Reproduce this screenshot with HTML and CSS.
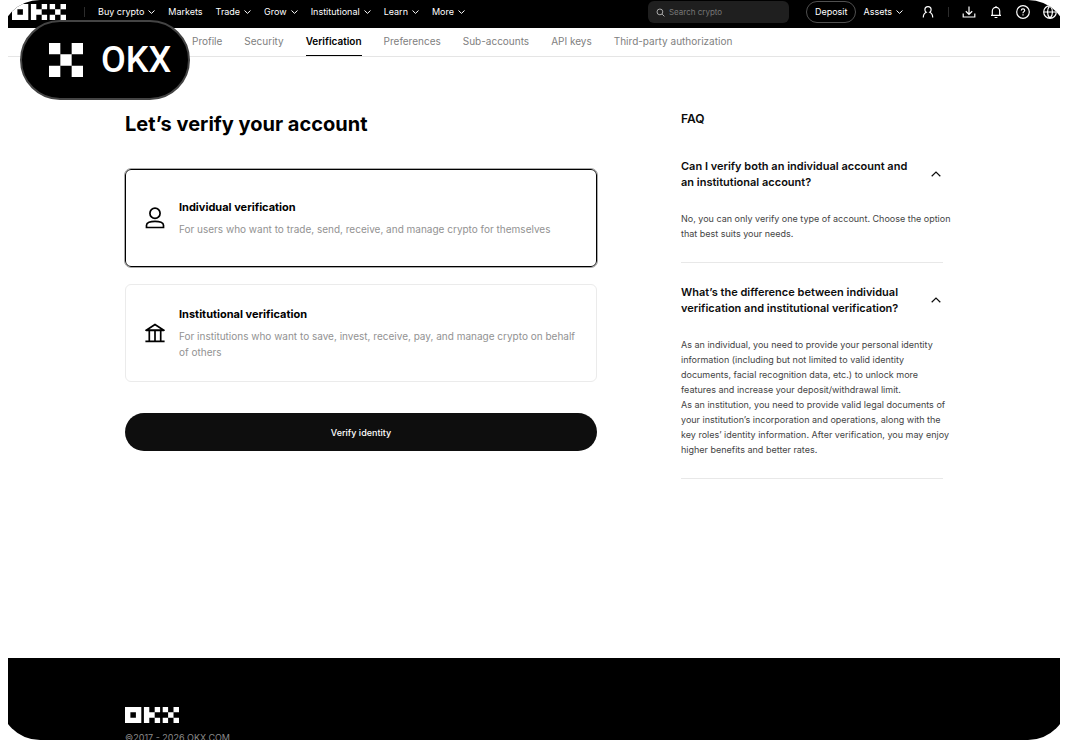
FILE: index.html
```html
<!DOCTYPE html>
<html lang="en">
<head>
<meta charset="utf-8">
<title>Verification | OKX</title>
<link rel="stylesheet" href="styles.css">
</head>
<body>
<svg width="0" height="0" class="defs" aria-hidden="true">
  <symbol id="chevron" viewBox="0 0 7 4"><path d="M.5 .5 3.500 3.400 6.500 .5" fill="none" stroke="currentColor"/></symbol>
  <symbol id="chevron-up" viewBox="0 0 10 6"><path d="M.7 5.200 5 1 9.300 5.200" fill="none" stroke="currentColor" stroke-width="1.200"/></symbol>
  <symbol id="logo" viewBox="0 0 54 16">
    <path fill="currentColor" fill-rule="evenodd" d="M0 0h16.300v16H0zM5.400 5.300v5.400h5.500V5.300zM18.900 0h5.400v5.300h5.400v5.400h-5.400V16h-5.400zM29.700 0h5.400v5.300h-5.400zM29.700 10.700h5.400V16h-5.400zM37.700 0h5.400v5.300h-5.400zM48.500 0H54v5.300h-5.500zM43.100 5.300h5.400v5.400h-5.400zM37.700 10.700h5.400V16h-5.400zM48.500 10.700H54V16h-5.500z"/>
  </symbol>
</svg>
<div class="frame">
  <header class="topbar">
    <a class="logo-link" href="#" aria-label="OKX home"><svg class="logo"><use href="#logo"/></svg></a>
    <span class="divider divider-logo"></span>
    <nav class="menu" aria-label="Main">
      <button class="menu-item">Buy crypto <svg class="chevron"><use href="#chevron"/></svg></button>
      <a class="menu-item" href="#">Markets</a>
      <button class="menu-item">Trade <svg class="chevron"><use href="#chevron"/></svg></button>
      <button class="menu-item">Grow <svg class="chevron"><use href="#chevron"/></svg></button>
      <button class="menu-item">Institutional <svg class="chevron"><use href="#chevron"/></svg></button>
      <button class="menu-item">Learn <svg class="chevron"><use href="#chevron"/></svg></button>
      <button class="menu-item">More <svg class="chevron"><use href="#chevron"/></svg></button>
    </nav>
    <label class="search">
      <svg class="search-icon" viewBox="0 0 9 9"><path d="M6.800 3.900a2.900 2.900 0 1 1-5.800 0 2.900 2.900 0 0 1 5.800 0zM6.100 6.100 8.400 8.400" fill="none" stroke="currentColor"/></svg>
      <input type="text" placeholder="Search crypto" aria-label="Search crypto">
    </label>
    <div class="account">
      <button class="deposit">Deposit</button>
      <button class="menu-item">Assets <svg class="chevron"><use href="#chevron"/></svg></button>
    </div>
    <div class="tools">
      <button class="tool" aria-label="Profile"><svg viewBox="0 0 14 14"><path d="M2.300 12.500c0-2.700 1-4.400 2.900-5.200C4.200 6.600 3.900 5.800 3.900 4.700a3.100 3.100 0 0 1 6.200 0c0 1.100-.3 1.900-1.300 2.600 1.900.8 2.900 2.500 2.900 5.200"/></svg></button>
      <span class="divider"></span>
      <button class="tool" aria-label="Download"><svg viewBox="0 0 14 14"><path d="M7 1.500v7.800M3.800 6.300 7 9.400l3.200-3.100M1.200 8.500V12h11.600V8.500"/></svg></button>
      <button class="tool" aria-label="Notifications"><svg viewBox="0 0 14 14"><path d="M2 10.300h10M3.300 10V6a3.700 3.700 0 0 1 7.400 0v4M5.600 12.500h2.800M7 1v1.300"/></svg></button>
      <button class="tool" aria-label="Help"><svg viewBox="0 0 14 14"><path d="M13.300 7A6.300 6.300 0 1 1 .7 7a6.300 6.300 0 0 1 12.600 0zM5.300 5.600c0-1 .7-1.700 1.700-1.700s1.700.6 1.700 1.500C8.700 6.600 7 6.700 7 8.200M7 9.200v1.200"/></svg></button>
      <button class="tool" aria-label="Language"><svg viewBox="0 0 14 14"><path d="M13.300 7A6.300 6.300 0 1 1 .7 7a6.300 6.300 0 0 1 12.600 0zM.7 7h12.600M7 .7C3.700 3.700 3.700 10.300 7 13.300M7 .7c3.300 3 3.300 9.600 0 12.600"/></svg></button>
    </div>
  </header>

  <nav class="tabs" aria-label="Account">
    <a class="tab" href="#">Profile</a>
    <a class="tab" href="#">Security</a>
    <a class="tab tab-active" href="#" aria-current="page">Verification</a>
    <a class="tab" href="#">Preferences</a>
    <a class="tab" href="#">Sub-accounts</a>
    <a class="tab" href="#">API keys</a>
    <a class="tab" href="#">Third-party authorization</a>
  </nav>

  <main class="content">
    <form class="verify">
      <h1 class="title">Let’s verify your account</h1>
      <label class="card">
        <input class="card-radio" type="radio" name="kind" checked>
        <svg class="card-icon" viewBox="0 0 20 22"><path d="M15.100 6.200a5.100 5.100 0 1 1-10.200 0 5.100 5.100 0 0 1 10.200 0zM1.500 20.500v-2.300c0-2.600 3.800-3.800 8.500-3.800s8.500 1.200 8.500 3.800v2.300z" fill="none" stroke="currentColor" stroke-width="1.700"/></svg>
        <span class="card-text">
          <span class="card-title">Individual verification</span>
          <span class="card-desc">For users who want to trade, send, receive, and manage crypto for themselves</span>
        </span>
      </label>
      <label class="card">
        <input class="card-radio" type="radio" name="kind">
        <svg class="card-icon" viewBox="0 0 20 22"><path d="M.4 19.300h19.200M1 8.300h18M10 2.500 1.600 8h16.800zM4.300 8.300v11M10 8.300v11M15.700 8.300v11" fill="none" stroke="currentColor" stroke-width="1.700"/></svg>
        <span class="card-text">
          <span class="card-title">Institutional verification</span>
          <span class="card-desc">For institutions who want to save, invest, receive, pay, and manage crypto on behalf of others</span>
        </span>
      </label>
      <button class="submit" type="button">Verify identity</button>
    </form>

    <aside class="faq">
      <h2 class="faq-heading">FAQ</h2>
      <section class="faq-item">
        <button class="faq-question" aria-expanded="true"><span>Can I verify both an individual account and an institutional account?</span><svg class="faq-arrow"><use href="#chevron-up"/></svg></button>
        <p class="faq-answer">No, you can only verify one type of account. Choose the option that best suits your needs.</p>
      </section>
      <section class="faq-item">
        <button class="faq-question" aria-expanded="true"><span>What’s the difference between individual verification and institutional verification?</span><svg class="faq-arrow"><use href="#chevron-up"/></svg></button>
        <p class="faq-answer">As an individual, you need to provide your personal identity information (including but not limited to valid identity documents, facial recognition data, etc.) to unlock more features and increase your deposit/withdrawal limit.<br>As an institution, you need to provide valid legal documents of your institution’s incorporation and operations, along with the key roles’ identity information. After verification, you may enjoy higher benefits and better rates.</p>
      </section>
    </aside>
  </main>

  <footer class="footer">
    <div class="footer-inner">
      <svg class="logo" role="img" aria-label="OKX"><use href="#logo"/></svg>
      <p class="copyright">©2017 - 2026 OKX.COM</p>
    </div>
  </footer>

  <div class="badge">
    <svg class="badge-mark" viewBox="0 0 3 3"><path fill="currentColor" d="M0 0h1v1H0zM2 0h1v1H2zM1 1h1v1H1zM0 2h1v1H0zM2 2h1v1H2z"/></svg>
    <span>OKX</span>
  </div>
</div>
</body>
</html>
```

FILE: styles.css
```css
* { box-sizing: border-box; }
body { margin: 0; background: #fff; color: #0c0c0c; font-family: Inter, "Liberation Sans", sans-serif; }
button { padding: 0; border: 0; background: none; color: inherit; font: inherit; text-align: left; cursor: pointer; }
a { color: inherit; text-decoration: none; }
h1, h2, p { margin: 0; }
.defs { position: absolute; }

.frame { position: relative; display: flex; flex-direction: column; height: 100vh; padding: 0 8px; border-radius: 40px; overflow: hidden; }

.topbar { display: flex; align-items: center; flex: none; height: 28px; padding: 0 4px 4px; background: #000; color: #fff; font-size: 9px; line-height: 12px; }
.logo { display: block; width: 54px; height: 16px; color: #fff; }
.divider { width: 1px; height: 10px; background: #2c2c2c; }
.divider-logo { margin: 0 13px 0 18px; }
.menu { display: flex; gap: 13px; }
.menu-item { display: flex; align-items: center; gap: 4px; white-space: nowrap; }
.chevron { width: 7px; height: 4px; }
.search { display: flex; align-items: center; gap: 4px; width: 141px; height: 22px; margin-left: auto; padding: 0 8px; border-radius: 6px; background: #1f1f1f; color: #aaa; }
.search-icon { flex: none; width: 9px; height: 9px; }
.search input { width: 100%; min-width: 0; padding: 0; border: 0; outline: 0; background: none; color: #fff; font: inherit; font-size: 8px; }
.search input::placeholder { color: #777; opacity: 1; }
.account { display: flex; align-items: center; gap: 7px; margin-left: 17px; }
.deposit { height: 22px; padding: 0 8px; border: 1px solid #505050; border-radius: 11px; }
.tools { display: flex; align-items: center; gap: 13px; margin: 0 -1px 0 18px; }
.tool svg { display: block; width: 14px; height: 14px; fill: none; stroke: #fff; stroke-width: 1.2; }

.tabs { display: flex; gap: 22px; flex: none; height: 29px; padding-left: 184px; border-bottom: 1px solid #e5e5e5; color: #808080; font-size: 10px; line-height: 27px; }
.tab { height: 28px; white-space: nowrap; }
.tab-active { border-bottom: 1px solid #000; color: #000; font-weight: 600; }

.content { display: flex; gap: 84px; flex: 1 0 auto; width: 100%; max-width: 818px; margin: 0 auto; padding-top: 53px; }
.verify { flex: 1; min-width: 0; }
.title { margin-bottom: 31px; font-size: 20px; font-weight: 700; line-height: 28px; color: #000; }
.card { display: flex; align-items: center; gap: 14px; min-height: 98px; margin-bottom: 17px; padding: 0 10px 0 19px; border: 1px solid #ebebeb; border-radius: 6px; }
.card:has(:checked) { border-color: #000; outline: 1px solid #aaa; }
.card-radio { position: absolute; opacity: 0; pointer-events: none; }
.card-icon { flex: none; width: 20px; height: 22px; color: #000; }
.card-text { display: block; }
.card-title { display: block; margin-bottom: 6px; font-size: 11px; font-weight: 700; line-height: 16px; color: #000; }
.card-desc { display: block; font-size: 10px; line-height: 16px; color: #929292; }
.submit { display: block; width: 100%; height: 38px; margin-top: 31px; border-radius: 19px; background: #0e0e0e; color: #fff; font-size: 9px; font-weight: 500; text-align: center; }

.faq { flex: none; width: 262px; }
.faq-heading { font-size: 12px; font-weight: 600; line-height: 17px; }
.faq-item { padding: 31px 0 21px; border-bottom: 1px solid #e8e8e8; }
.faq-item + .faq-item { padding-top: 21px; }
.faq-question { display: flex; align-items: center; justify-content: space-between; width: 100%; padding-right: 2px; font-size: 11px; font-weight: 600; line-height: 16px; }
.faq-question span { max-width: 240px; }
.faq-arrow { flex: none; width: 10px; height: 6px; }
.faq-answer { margin: 21px -10px 0 0; font-size: 9px; line-height: 15px; color: #444; }

.footer { flex: none; height: 82px; background: #000; color: #8a8a8a; }
.footer-inner { max-width: 818px; margin: 0 auto; padding-top: 49px; }
.copyright { margin-top: 8px; font-size: 9px; line-height: 14px; }

.badge { position: absolute; top: 20px; left: 20px; display: flex; align-items: center; gap: 18px; width: 170px; height: 80px; padding-left: 27px; border: 2px solid #444; border-radius: 40px; background: #000; color: #fff; font-family: Roboto, sans-serif; font-size: 36px; font-weight: 500; }
.badge-mark { width: 34px; height: 34px; }
```
